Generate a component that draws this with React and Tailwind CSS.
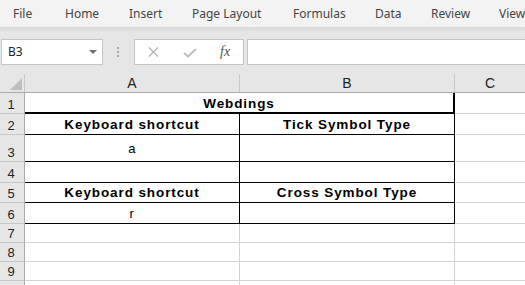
import React from "react";

const tabs = [
  { label: "File", w: "w-[52px]" },
  { label: "Home", w: "w-[64px]" },
  { label: "Insert", w: "w-[63px]" },
  { label: "Page Layout", w: "w-[101px]" },
  { label: "Formulas", w: "w-[82px]" },
  { label: "Data", w: "w-[56px]" },
  { label: "Review", w: "w-[68px]" },
  { label: "View", w: "w-[40px]" },
];

const cellFont = { fontFamily: '"Liberation Sans", Arial, sans-serif' };
const uiFont = { fontFamily: '"Noto Sans", "Open Sans", sans-serif' };

function RowHead({ n }) {
  return (
    <div className="w-[25px] shrink-0 bg-[#e6e6e6] border-r border-r-[#ababab] border-b border-b-[#c8c8c8] flex items-end justify-center pr-[2px] pb-[1px] text-[13px] leading-[15px] text-[#222]">
      {n}
    </div>
  );
}

function GridCell({ w }) {
  return <div className={`${w} shrink-0 border-r border-b border-[#d4d4d4]`} />;
}

function TailCell() {
  return <div className="flex-1 border-b border-[#d4d4d4]" />;
}

function Cell({ children, bold }) {
  return (
    <div
      className={`w-[215px] shrink-0 border-r border-b border-black flex items-center justify-center leading-[15px] text-black ${
        bold ? "font-bold text-[13.5px] tracking-[0.9px]" : "text-[13px] tracking-[0.5px]"
      }`}
    >
      {children}
    </div>
  );
}

export default function App() {
  return (
    <div className="w-[525px] h-[285px] overflow-hidden bg-white flex flex-col">
      {/* Ribbon tabs */}
      <div
        className="h-[27px] shrink-0 bg-[#f3f3f3] flex items-center pl-[13px] text-[12px] text-[#444] whitespace-nowrap"
        style={uiFont}
      >
        {tabs.map((t) => (
          <span key={t.label} className={`${t.w} shrink-0`}>
            {t.label}
          </span>
        ))}
      </div>

      {/* Formula bar area */}
      <div className="h-[47px] shrink-0 bg-[linear-gradient(#d8d8d8,#e6e6e6_5px)] pt-[12px] flex items-start" style={uiFont}>
        <div className="ml-[1px] w-[102px] h-[26px] shrink-0 bg-white border border-[#c6c6c6] flex items-center pl-[6px] pr-[5px]">
          <span className="text-[12px] text-[#222] flex-1">B3</span>
          <svg width="8" height="4" viewBox="0 0 8 4">
            <path d="M0 0 L8 0 L4 4 Z" fill="#707070" />
          </svg>
        </div>
        <div className="w-[31px] h-[26px] shrink-0 flex flex-col items-center justify-center gap-[2px] pr-[1px]">
          <div className="w-[2px] h-[2px] bg-[#a8a8a8]" />
          <div className="w-[2px] h-[2px] bg-[#a8a8a8]" />
          <div className="w-[2px] h-[2px] bg-[#a8a8a8]" />
        </div>
        <div className="w-[110px] h-[26px] shrink-0 bg-white border border-[#c6c6c6] flex items-center">
          <svg className="ml-[13px]" width="11" height="10" viewBox="0 0 11 10">
            <path d="M1 0.5 L10 9.5 M10 0.5 L1 9.5" stroke="#b4b4b4" strokeWidth="1.3" fill="none" />
          </svg>
          <svg className="ml-[24px] mt-[1px]" width="14" height="10" viewBox="0 0 14 10">
            <path d="M1 5 L5 8.5 L13 1" stroke="#bdbdbd" strokeWidth="2" fill="none" />
          </svg>
          <span
            className="ml-[23px] text-[14px] italic text-[#555] leading-none"
            style={{ fontFamily: '"Liberation Serif", "Times New Roman", serif' }}
          >
            fx
          </span>
        </div>
        <div className="ml-[3px] flex-1 h-[26px] bg-white border border-r-0 border-[#c6c6c6]" />
      </div>

      {/* Sheet */}
      <div className="flex-1 flex flex-col" style={cellFont}>
        {/* Column header */}
        <div className="h-[19px] shrink-0 flex bg-[#e6e6e6] border-b border-b-[#ababab] text-[14px] text-[#222] leading-[16px]">
          <div className="w-[25px] shrink-0 border-r border-r-[#c8c8c8] flex items-end justify-end pr-[2px] pb-[2px]">
            <svg width="12" height="12" viewBox="0 0 12 12">
              <path d="M12 0 L12 12 L0 12 Z" fill="#bfbfbf" />
            </svg>
          </div>
          <div className="w-[215px] shrink-0 border-r border-r-[#c8c8c8] flex items-end justify-center pb-[1px]">A</div>
          <div className="w-[215px] shrink-0 border-r border-r-[#c8c8c8] flex items-end justify-center pb-[1px]">B</div>
          <div className="flex-1 flex items-end justify-center pb-[1px]">C</div>
        </div>

        {/* Row 1 */}
        <div className="h-[21px] shrink-0 flex">
          <RowHead n="1" />
          <div className="w-[430px] shrink-0 border-r-2 border-b-2 border-black flex items-center justify-center font-bold text-[13.5px] leading-[15px] tracking-[0.9px] text-black pt-[1px]">
            Webdings
          </div>
          <TailCell />
        </div>

        {/* Row 2 */}
        <div className="h-[21px] shrink-0 flex">
          <RowHead n="2" />
          <Cell bold>Keyboard shortcut</Cell>
          <Cell bold>Tick Symbol Type</Cell>
          <TailCell />
        </div>

        {/* Row 3 */}
        <div className="h-[27px] shrink-0 flex">
          <RowHead n="3" />
          <Cell>a</Cell>
          <Cell />
          <TailCell />
        </div>

        {/* Row 4 */}
        <div className="h-[21px] shrink-0 flex">
          <RowHead n="4" />
          <Cell />
          <Cell />
          <TailCell />
        </div>

        {/* Row 5 */}
        <div className="h-[20px] shrink-0 flex">
          <RowHead n="5" />
          <Cell bold>Keyboard shortcut</Cell>
          <Cell bold>Cross Symbol Type</Cell>
          <TailCell />
        </div>

        {/* Row 6 */}
        <div className="h-[21px] shrink-0 flex">
          <RowHead n="6" />
          <Cell>r</Cell>
          <Cell />
          <TailCell />
        </div>

        {/* Rows 7-10 */}
        {["7", "8", "9", "10"].map((n) => (
          <div key={n} className="h-[19px] shrink-0 flex">
            <RowHead n={n} />
            <GridCell w="w-[215px]" />
            <GridCell w="w-[215px]" />
            <TailCell />
          </div>
        ))}
      </div>
    </div>
  );
}
